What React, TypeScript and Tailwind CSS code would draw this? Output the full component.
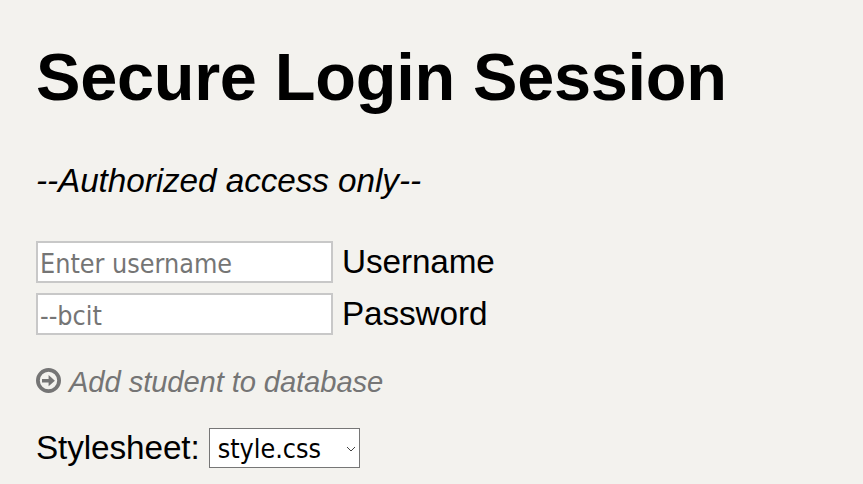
import type { InputHTMLAttributes } from "react";

function Field({ label, ...input }: { label: string } & InputHTMLAttributes<HTMLInputElement>) {
  return (
    <label className="flex h-[42px] items-center gap-[9px]">
      <input
        {...input}
        className="h-[42px] w-[297px] rounded-none border-2 border-[#c8c8c8] bg-white px-[2px] pt-[2px] font-['DejaVu_Sans_Condensed','DejaVu_Sans',sans-serif] text-[26.7px] leading-[36px] font-stretch-condensed text-black outline-none placeholder:text-[#757575]"
      />
      <span className="text-[33.3px] leading-[38px] tracking-[-0.1px]">{label}</span>
    </label>
  );
}

function ArrowCircle() {
  return (
    <svg viewBox="0 0 26 26" className="h-[26px] w-[26px] shrink-0" aria-hidden="true">
      <circle cx="12.5" cy="12.5" r="10.6" fill="none" stroke="#757575" strokeWidth="3.8" />
      <path d="M6 10.9h6.6V7.1L18.9 12.7l-6.3 5.6v-3.7H6z" fill="#757575" />
    </svg>
  );
}

export default function App() {
  return (
    <main className="flex h-[484px] w-[863px] flex-col items-start overflow-hidden bg-[#f3f2ee] pl-9 font-['Liberation_Sans',Arial,sans-serif] text-black">
      <h1 className="mt-[39px] whitespace-nowrap text-[66.7px] leading-[76px] font-bold tracking-[-0.3px]">Secure Login Session</h1>
      <p className="mt-[47px] text-[33.3px] leading-[38px] tracking-[-0.07px] italic">--Authorized access only--</p>
      <form className="mt-[41px] flex flex-col items-start">
        <div className="flex flex-col gap-[10px]">
          <Field label="Username" placeholder="Enter username" type="text" />
          <Field label="Password" placeholder="--bcit" type="password" />
        </div>
        <a className="mt-[29px] flex h-[34px] items-center gap-[7px] text-[29.2px] leading-[34px] tracking-[-0.1px] text-[#757575] italic">
          <ArrowCircle />
          <span className="pt-[2px]">Add student to database</span>
        </a>
        <div className="mt-[30px] flex h-[40px] items-center gap-[9px]">
          <label htmlFor="stylesheet" className="text-[33.3px] leading-[38px] tracking-[-0.1px]">Stylesheet:</label>
          <div className="grid h-[40px] w-[151px]">
            <select
              id="stylesheet"
              className="col-start-1 row-start-1 h-[40px] w-[151px] appearance-none rounded-none border border-[#767676] bg-white pt-[2px] pl-[8px] font-['DejaVu_Sans_Condensed','DejaVu_Sans',sans-serif] text-[26.7px] leading-[36px] font-stretch-condensed text-black"
            >
              <option>style.css</option>
            </select>
            <svg viewBox="0 0 10 6" className="pointer-events-none col-start-1 row-start-1 mr-[4px] mt-[1px] h-[6px] w-[10px] self-center justify-self-end" aria-hidden="true">
              <path d="M1 1l4 4 4-4" fill="none" stroke="#444" strokeWidth="1" />
            </svg>
          </div>
        </div>
      </form>
    </main>
  );
}
